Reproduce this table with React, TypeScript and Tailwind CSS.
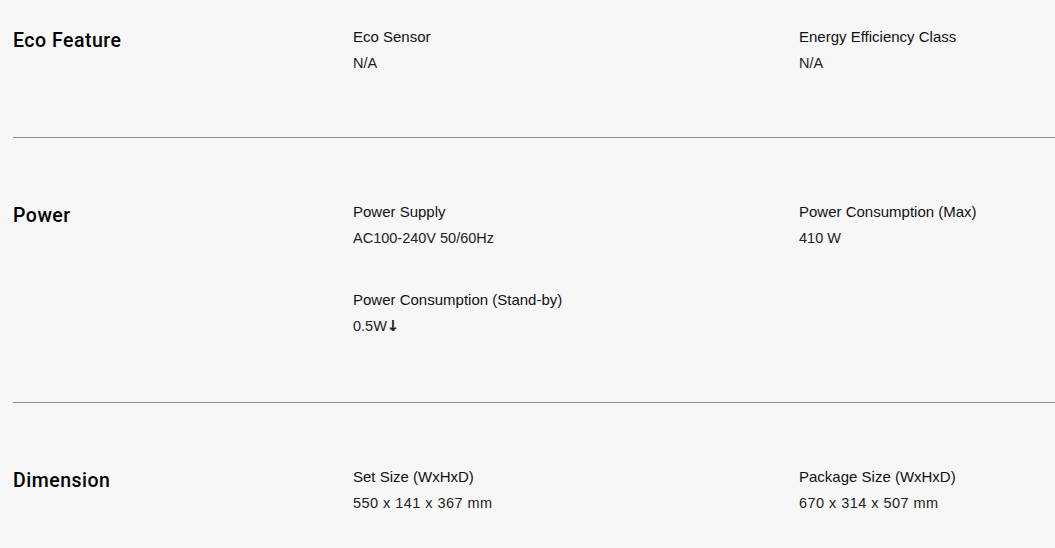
import { ReactNode } from "react";

type Spec = { label: string; value: ReactNode; wide?: boolean };

type Section = { title: string; specs: Spec[] };

const sections: Section[] = [
  {
    title: "Eco Feature",
    specs: [
      { label: "Eco Sensor", value: "N/A" },
      { label: "Energy Efficiency Class", value: "N/A" },
    ],
  },
  {
    title: "Power",
    specs: [
      { label: "Power Supply", value: "AC100-240V 50/60Hz" },
      { label: "Power Consumption (Max)", value: "410 W" },
      {
        label: "Power Consumption (Stand-by)",
        value: (
          <>
            0.5W<span className="font-['DejaVu_Sans',sans-serif] text-[15px] font-bold">↓</span>
          </>
        ),
      },
    ],
  },
  {
    title: "Dimension",
    specs: [
      { label: "Set Size (WxHxD)", value: "550 x 141 x 367 mm", wide: true },
      { label: "Package Size (WxHxD)", value: "670 x 314 x 507 mm", wide: true },
    ],
  },
];

function SpecItem({ spec }: { spec: Spec }) {
  return (
    <div>
      <div className="text-[15px] leading-5 text-[#111]">{spec.label}</div>
      <div
        className={
          spec.wide
            ? "mt-1.5 text-[14.5px] leading-5 tracking-[0.45px] text-[#222]"
            : "mt-1.5 text-[14.5px] leading-5 text-[#222]"
        }
      >
        {spec.value}
      </div>
    </div>
  );
}

export default function App() {
  return (
    <div className="min-h-screen bg-[#f7f7f7] pl-[13px] font-['Liberation_Sans',Arial,sans-serif] text-black">
      {sections.map((s, i) => (
        <section
          key={s.title}
          className={
            i === 0
              ? "grid grid-cols-[340px_446px_1fr] border-b border-[#8f8f8f] pt-[27px] pb-[64px]"
              : i === sections.length - 1
                ? "grid grid-cols-[340px_446px_1fr] pt-[64px] pb-[40px]"
                : "grid grid-cols-[340px_446px_1fr] border-b border-[#8f8f8f] pt-[64px] pb-[66px]"
          }
        >
          <h2 className="mt-[2px] font-['Roboto',sans-serif] text-[19.5px] leading-6 font-medium tracking-[0.5px] text-black">
            {s.title}
          </h2>
          <div className="col-span-2 grid grid-cols-[446px_1fr] gap-y-[42px]">
            {s.specs.map((spec) => (
              <SpecItem key={spec.label} spec={spec} />
            ))}
          </div>
        </section>
      ))}
    </div>
  );
}
